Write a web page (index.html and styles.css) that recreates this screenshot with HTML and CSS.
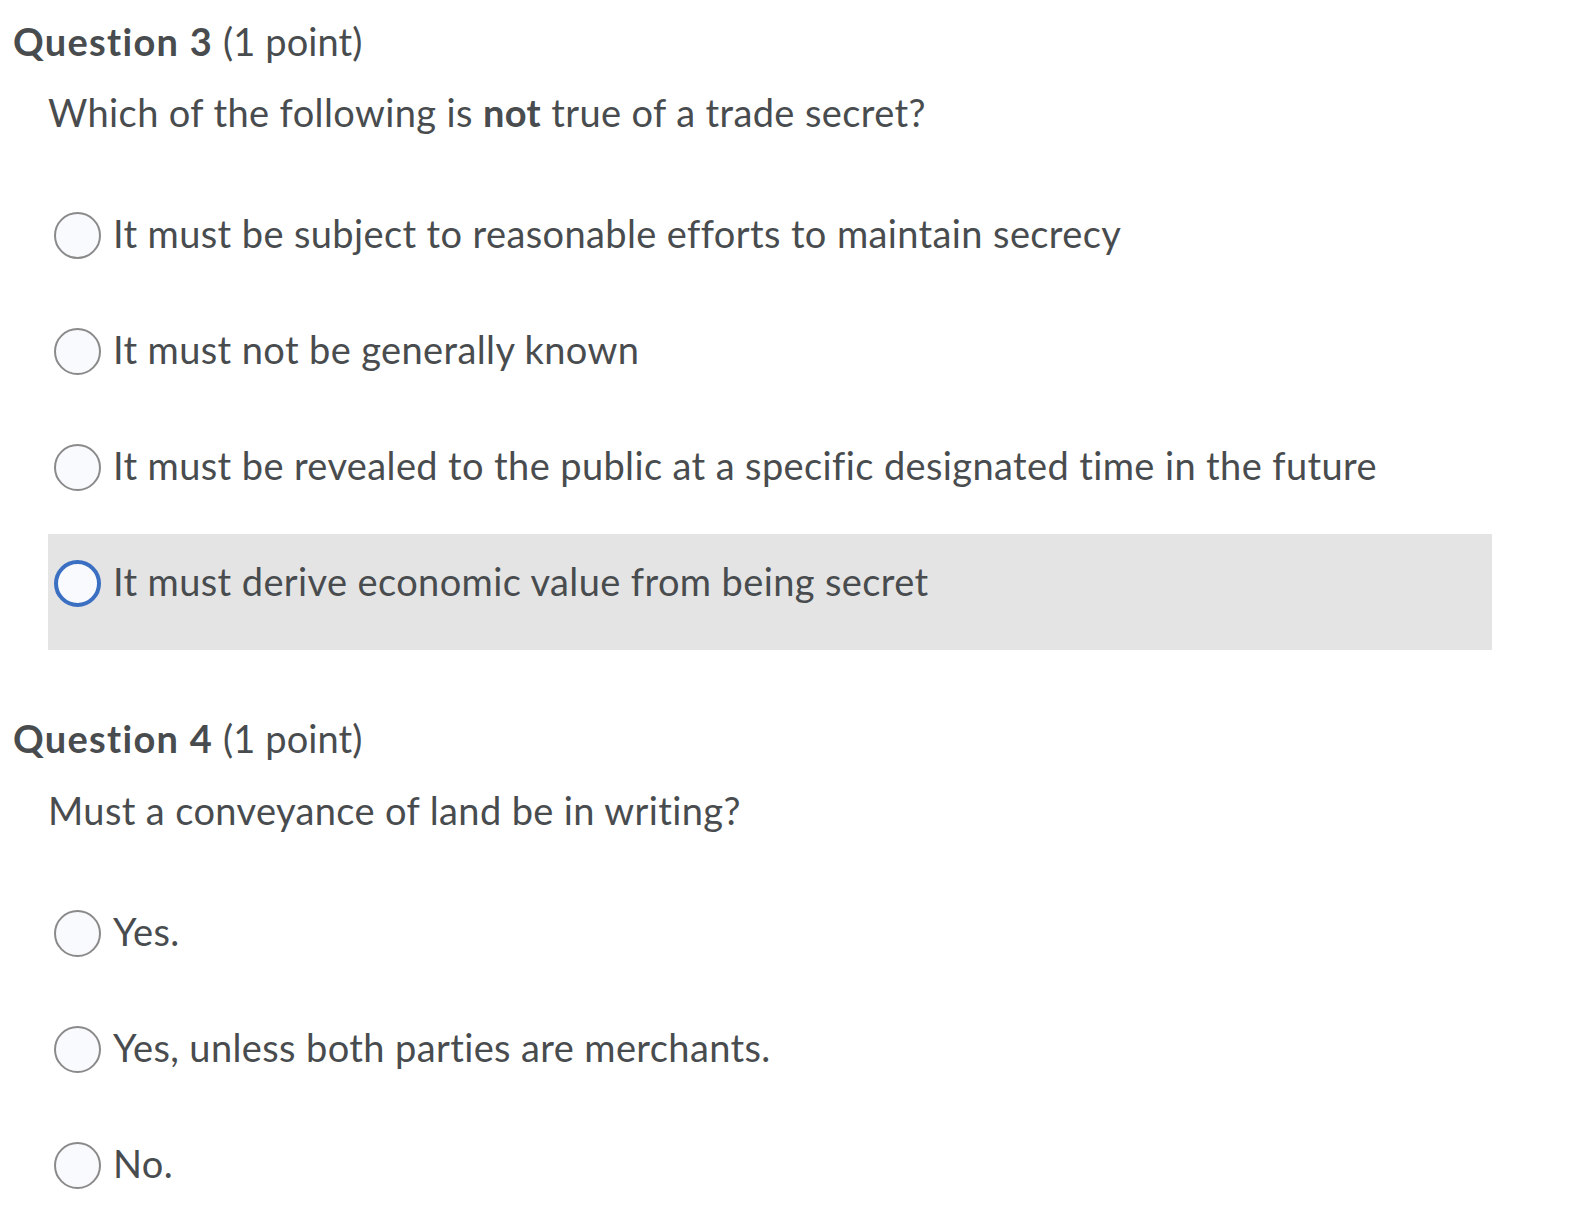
FILE: index.html
```html
<!DOCTYPE html>
<html lang="en">
<head>
<meta charset="utf-8">
<title>Quiz</title>
<link rel="stylesheet" href="styles.css">
</head>
<body>
<section class="question">
  <h2 class="q-title"><strong>Question 3</strong> (1 point)</h2>
  <p class="q-text">Which of the following is <strong>not</strong> true of a trade secret?</p>
  <div class="options">
    <label class="option"><span class="radio"></span><span class="label">It must be subject to reasonable efforts to maintain secrecy</span></label>
    <label class="option"><span class="radio"></span><span class="label">It must not be generally known</span></label>
    <label class="option"><span class="radio"></span><span class="label">It must be revealed to the public at a specific designated time in the future</span></label>
    <label class="option hover"><span class="radio focus"></span><span class="label">It must derive economic value from being secret</span></label>
  </div>
</section>
<section class="question second">
  <h2 class="q-title"><strong>Question 4</strong> (1 point)</h2>
  <p class="q-text">Must a conveyance of land be in writing?</p>
  <div class="options">
    <label class="option"><span class="radio"></span><span class="label">Yes.</span></label>
    <label class="option"><span class="radio"></span><span class="label">Yes, unless both parties are merchants.</span></label>
    <label class="option"><span class="radio"></span><span class="label">No.</span></label>
  </div>
</section>
</body>
</html>
```
FILE: styles.css
```css
html, body {
  margin: 0;
  padding: 0;
  background: #ffffff;
}
body {
  font-family: Lato, "Open Sans", "Liberation Sans", sans-serif;
  font-size: 38px;
  line-height: 46px;
  color: #494c4e;
  letter-spacing: 0.38px;
  font-variant-ligatures: none;
}
.question {
  display: flex;
  flex-direction: column;
}
.q-title {
  margin: 18px 0 0 13px;
  font-size: 38px;
  font-weight: 400;
  line-height: 46px;
  letter-spacing: 0.1px;
}
.q-title strong {
  font-weight: 700;
  letter-spacing: 1.3px;
}
.q-text {
  margin: 25px 0 0 48px;
}
.q-text strong {
  font-weight: 700;
}
.options {
  margin: 51px 0 0 48px;
  width: 1444px;
  display: flex;
  flex-direction: column;
}
.option {
  display: flex;
  align-items: flex-start;
  height: 116px;
  box-sizing: border-box;
  padding: 24px 0 0 6px;
}
.option.hover {
  background: #e4e4e4;
}
.radio {
  flex: none;
  width: 47px;
  height: 47px;
  margin-top: 2px;
  box-sizing: border-box;
  border-radius: 50%;
  border: 2px solid #8a8a8a;
  background: #f9fafe;
}
.radio.focus {
  border: 4px solid #3a6fc2;
}
.label {
  margin-left: 12px;
  white-space: nowrap;
}
.second .q-title {
  margin-top: 65px;
}
.second .q-text {
  margin-top: 26px;
}
```
